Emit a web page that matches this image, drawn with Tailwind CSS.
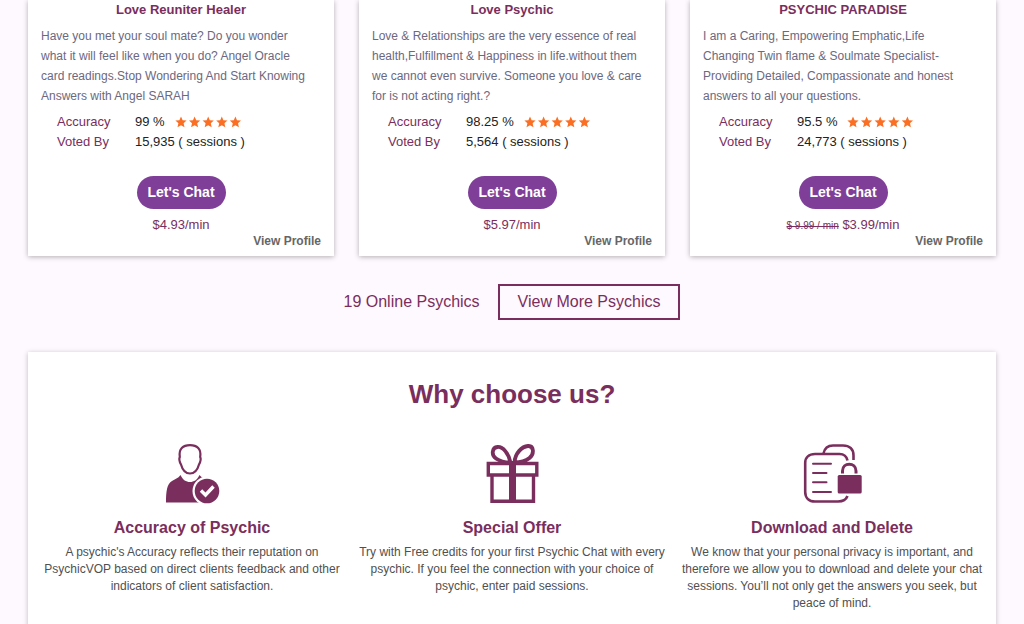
<!DOCTYPE html>
<html lang="en">
<head>
  <meta charset="UTF-8" />
  <meta name="viewport" content="width=device-width, initial-scale=1.0" />
  <title>Online Psychics</title>
  <script src="https://cdn.jsdelivr.net/npm/@tailwindcss/browser@4"></script>
</head>
<body class="bg-[#fef9fe] px-7 font-['Liberation_Sans',Arial,sans-serif] text-[#7a2e5d] overflow-x-hidden">
  <svg class="hidden" aria-hidden="true">
    <symbol id="stars" viewBox="0 0 68 12">
      <g fill="#fb6f24">
        <path id="star" d="M6 .5l1.600 3.700 4 .4-3 2.700.9 4L6 9.200l-3.500 2.100.9-4-3-2.700 4-.4z" />
        <use href="#star" x="13.600" />
        <use href="#star" x="27.200" />
        <use href="#star" x="40.800" />
        <use href="#star" x="54.400" />
      </g>
    </symbol>
  </svg>

  <!-- Psychic cards -->
  <section class="grid grid-cols-3 gap-[25px]">
    <article class="bg-white shadow-[0_1px_5px_rgba(0,0,0,0.3)] px-[13px] pb-[7px]">
      <h3 class="text-[13px] leading-5 font-bold text-center">Love Reuniter Healer</h3>
      <p class="mt-[6px] text-[12px] leading-5 text-[#6c6880]">Have you met your soul mate? Do you wonder<br />what it will feel like when you do? Angel Oracle<br />card readings.Stop Wondering And Start Knowing<br />Answers with Angel SARAH</p>
      <dl class="mt-[6px] pl-4 grid grid-cols-[78px_1fr] text-[13px] leading-5">
        <dt>Accuracy</dt>
        <dd class="flex items-center gap-[10px] text-[#222]">99 % <svg class="w-[68px] h-3" role="img" aria-label="5 stars"><use href="#stars" /></svg></dd>
        <dt>Voted By</dt>
        <dd class="text-[#222]">15,935 ( sessions )</dd>
      </dl>
      <div class="mt-6 text-center">
        <button type="button" class="block mx-auto h-[33px] w-[89px] rounded-full bg-[#7f3f98] text-white text-[14px] font-bold whitespace-nowrap">Let's Chat</button>
        <p class="mt-2 text-[13px] leading-4">$4.93/min</p>
      </div>
      <div class="text-right text-[12px] leading-4"><a href="#" class="font-bold text-[#666]">View Profile</a></div>
    </article>

    <article class="bg-white shadow-[0_1px_5px_rgba(0,0,0,0.3)] px-[13px] pb-[7px]">
      <h3 class="text-[13px] leading-5 font-bold text-center">Love Psychic</h3>
      <p class="mt-[6px] text-[12px] leading-5 text-[#6c6880]">Love &amp; Relationships are the very essence of real<br />health,Fulfillment &amp; Happiness in life.without them<br />we cannot even survive. Someone you love &amp; care<br />for is not acting right.?</p>
      <dl class="mt-[6px] pl-4 grid grid-cols-[78px_1fr] text-[13px] leading-5">
        <dt>Accuracy</dt>
        <dd class="flex items-center gap-[10px] text-[#222]">98.25 % <svg class="w-[68px] h-3" role="img" aria-label="5 stars"><use href="#stars" /></svg></dd>
        <dt>Voted By</dt>
        <dd class="text-[#222]">5,564 ( sessions )</dd>
      </dl>
      <div class="mt-6 text-center">
        <button type="button" class="block mx-auto h-[33px] w-[89px] rounded-full bg-[#7f3f98] text-white text-[14px] font-bold whitespace-nowrap">Let's Chat</button>
        <p class="mt-2 text-[13px] leading-4">$5.97/min</p>
      </div>
      <div class="text-right text-[12px] leading-4"><a href="#" class="font-bold text-[#666]">View Profile</a></div>
    </article>

    <article class="bg-white shadow-[0_1px_5px_rgba(0,0,0,0.3)] px-[13px] pb-[7px]">
      <h3 class="text-[13px] leading-5 font-bold text-center">PSYCHIC PARADISE</h3>
      <p class="mt-[6px] text-[12px] leading-5 text-[#6c6880]">I am a Caring, Empowering Emphatic,Life<br />Changing Twin flame &amp; Soulmate Specialist-<br />Providing Detailed, Compassionate and honest<br />answers to all your questions.</p>
      <dl class="mt-[6px] pl-4 grid grid-cols-[78px_1fr] text-[13px] leading-5">
        <dt>Accuracy</dt>
        <dd class="flex items-center gap-[10px] text-[#222]">95.5 % <svg class="w-[68px] h-3" role="img" aria-label="5 stars"><use href="#stars" /></svg></dd>
        <dt>Voted By</dt>
        <dd class="text-[#222]">24,773 ( sessions )</dd>
      </dl>
      <div class="mt-6 text-center">
        <button type="button" class="block mx-auto h-[33px] w-[89px] rounded-full bg-[#7f3f98] text-white text-[14px] font-bold whitespace-nowrap">Let's Chat</button>
        <p class="mt-2 text-[13px] leading-4"><s class="text-[10px] leading-none">$ 9.99 / min</s> $3.99/min</p>
      </div>
      <div class="text-right text-[12px] leading-4"><a href="#" class="font-bold text-[#666]">View Profile</a></div>
    </article>
  </section>

  <div class="mt-7 flex items-center justify-center gap-[18px] text-[16px]">
    <span>19 Online Psychics</span>
    <a href="#" class="border-2 border-[#7a2e5d] px-[18px] leading-8">View More Psychics</a>
  </div>

  <!-- Why choose us -->
  <section class="mt-8 bg-white shadow-[0_1px_5px_rgba(0,0,0,0.25)] px-1 pt-6 pb-8 text-center">
    <h2 class="text-[26px] leading-9 font-bold">Why choose us?</h2>
    <div class="mt-8 grid grid-cols-3">
      <div class="px-1">
        <svg class="mx-auto w-[60px] h-[60px]" viewBox="0 0 60 60" aria-hidden="true">
          <path d="M4 58.500C4 47 5 40 10 37c3-2 6-2.500 8.500-6C21 36 24 38 28 38s7-2 9.500-7c3 3.500 7 4 11 6.500 3 2 4 6 4 9v12z" fill="#7a2e5d" />
          <path d="M17.800 13C16.500 5 21 1.200 28 1.200S39.500 5 38.200 13c1.200 2.500.2 5-1.200 7.500C35.500 26 32 29.500 28 29.500s-7.500-3.500-9-9c-1.400-2.500-2.400-5-1.200-7.500z" fill="#fff" stroke="#7a2e5d" stroke-width="2.200" />
          <circle cx="45" cy="47" r="14.500" fill="#fff" />
          <circle cx="45" cy="47" r="12.300" fill="#7a2e5d" />
          <path d="M39 46.500l4.500 4.500 8-8.500" fill="none" stroke="#fff" stroke-width="3.400" />
        </svg>
        <h3 class="mt-3 text-[16px] leading-6 font-bold">Accuracy of Psychic</h3>
        <p class="mt-1 text-[12px] leading-[17px] text-[#505050]">A psychic's Accuracy reflects their reputation on PsychicVOP based on direct clients feedback and other indicators of client satisfaction.</p>
      </div>
      <div class="px-1">
        <svg class="mx-auto w-[60px] h-[60px]" viewBox="0 0 60 60" fill="none" stroke="#7a2e5d" aria-hidden="true">
          <path d="M6.300 19.500h48.500v11.500H6.300zM10 31h41.500v26.200H10z" stroke-width="3.400" />
          <rect x="27" y="17" width="7" height="42" fill="#7a2e5d" stroke="none" />
          <path d="M28.500 18.500C27 10 21 2.500 15.500 3S9 11 14 14.500s8.500 4 14.500 4z" stroke-width="3.800" />
          <path d="M32.500 18.500C33 9 40 2.500 46 2s6.500 8 1.500 12-9 4.500-15 4.500z" stroke-width="3.800" />
        </svg>
        <h3 class="mt-3 text-[16px] leading-6 font-bold">Special Offer</h3>
        <p class="mt-1 text-[12px] leading-[17px] text-[#505050]">Try with Free credits for your first Psychic Chat with every psychic. If you feel the connection with your choice of psychic, enter paid sessions.</p>
      </div>
      <div class="px-1">
        <svg class="mx-auto w-[60px] h-[60px]" viewBox="0 0 60 60" fill="none" stroke="#7a2e5d" stroke-width="2.600" aria-hidden="true">
          <path d="M45.500 16.500c-1-4.500-4-6.500-8-6.500H13C7 10 3.200 13.500 3.200 19v29c0 6 3.800 9.500 9.800 9.500h23c5 0 8-1.500 9.500-5.500" />
          <path d="M21.500 9.500c1-5 4.500-8 9.500-8h10c6.500 0 10.500 3.500 10.500 10V16" />
          <path d="M11 19.700h18M11 29h13.500M11 38.300h13.500M11 48h18" stroke-width="2" stroke-linecap="round" />
          <path d="M40.500 29.500V27c0-9 13.500-9 13.500 0v2.500" stroke-width="3" />
          <rect x="35.700" y="31" width="24" height="18.500" rx="1.500" fill="#7a2e5d" stroke="none" />
        </svg>
        <h3 class="mt-3 text-[16px] leading-6 font-bold">Download and Delete</h3>
        <p class="mt-1 text-[12px] leading-[17px] text-[#505050]">We know that your personal privacy is important, and therefore we allow you to download and delete your chat sessions. You’ll not only get the answers you seek, but peace of mind.</p>
      </div>
    </div>
  </section>
</body>
</html>
